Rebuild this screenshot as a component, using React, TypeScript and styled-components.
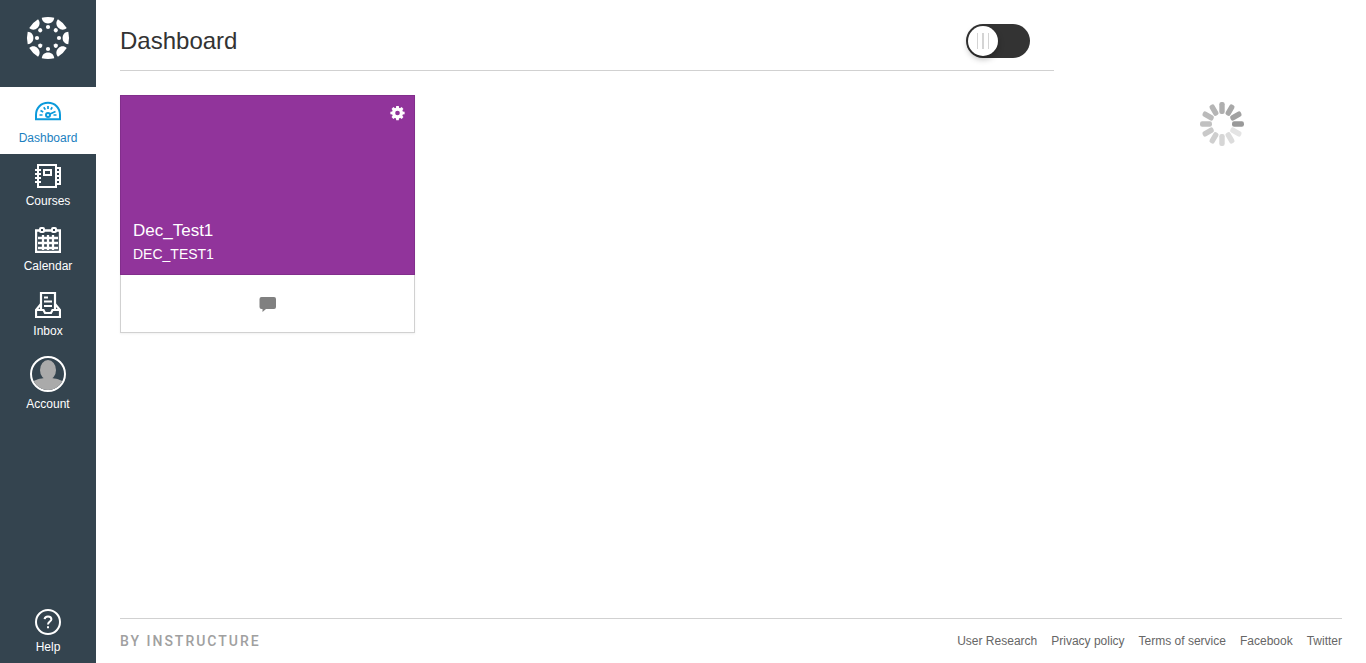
import React from 'react';
import styled, { createGlobalStyle, css } from 'styled-components';

const GlobalStyle = createGlobalStyle`
  *, *::before, *::after { box-sizing: border-box; }
  body {
    margin: 0;
    background: #fff;
    color: #333;
    font-family: "Liberation Sans", Arial, sans-serif;
    font-size: 12px;
    line-height: 16px;
  }
  a { color: inherit; text-decoration: none; }
  svg { display: block; }
`;

const Page = styled.div`
  display: flex;
  min-height: 100vh;
`;

const SideNav = styled.nav`
  flex: none;
  display: flex;
  flex-direction: column;
  width: 96px;
  background: #34444f;
`;

const LogoLink = styled.a`
  display: flex;
  justify-content: center;
  height: 87px;
  padding-top: 16px;
`;

const NavList = styled.ul`
  list-style: none;
  margin: 0;
  padding: 0;
  flex: 1;
  display: flex;
  flex-direction: column;
`;

const NavItem = styled.li<{ $last?: boolean }>`
  ${({ $last }) => $last && css`margin-top: auto;`}
`;

const NavLink = styled.a<{ $active?: boolean }>`
  display: flex;
  flex-direction: column;
  align-items: center;
  gap: 5px;
  padding: ${({ $active }) => ($active ? '9px 0 8px' : '9px 0')};
  color: ${({ $active }) => ($active ? '#1c7fc0' : '#fff')};
  background: ${({ $active }) => ($active ? '#fff' : 'transparent')};
`;

const HelpLink = styled(NavLink)`
  gap: 4px;
  padding-bottom: 8px;
`;

const Avatar = styled.span`
  width: 36px;
  height: 36px;
  margin: -1px 0;
  border: 2px solid #fff;
  border-radius: 50%;
  overflow: hidden;
`;

const Content = styled.div`
  flex: 1;
  min-width: 0;
  display: flex;
  flex-direction: column;
  padding: 0 24px;
`;

const Columns = styled.div`
  flex: 1;
  display: flex;
  gap: 24px;
`;

const Main = styled.main`
  flex: 1;
  min-width: 0;
`;

const Header = styled.header`
  display: flex;
  align-items: center;
  justify-content: space-between;
  padding: 24px 24px 12px 0;
  border-bottom: 1px solid #d1d1d1;
`;

const Title = styled.h1`
  margin: 0;
  font-size: 24px;
  line-height: 34px;
  font-weight: 400;
`;

const Switch = styled.input`
  appearance: none;
  margin: 0;
  width: 64px;
  height: 34px;
  padding: 2px;
  border-radius: 17px;
  background: #333;
  cursor: pointer;

  &::before {
    content: "";
    display: block;
    width: 30px;
    height: 30px;
    border-radius: 50%;
    background:
      linear-gradient(#d4d4d4, #d4d4d4) 9px 7px / 1px 16px no-repeat,
      linear-gradient(#d4d4d4, #d4d4d4) 14px 7px / 2px 16px no-repeat,
      linear-gradient(#d4d4d4, #d4d4d4) 20px 7px / 1px 16px no-repeat,
      #fff;
    box-shadow: 0 3px 6px rgba(0, 0, 0, 0.3);
  }
  &:checked::before { margin-left: 30px; }
`;

const Cards = styled.div`
  display: flex;
  flex-wrap: wrap;
  gap: 24px;
  padding: 24px 0;
`;

const Card = styled.article`
  width: 295px;
  box-shadow: 0 1px 2px rgba(0, 0, 0, 0.06);
`;

const CardHero = styled.div`
  display: flex;
  flex-direction: column;
  justify-content: space-between;
  height: 180px;
  padding: 9px 9px 8px 12px;
  border: 1px solid #822e8c;
  background: #91349b;
  color: #fff;
`;

const IconButton = styled.button`
  align-self: flex-end;
  padding: 0;
  border: 0;
  background: none;
  color: inherit;
  cursor: pointer;
`;

const CardName = styled.h2`
  margin: 0;
  font-size: 17px;
  line-height: 22px;
  font-weight: 400;
`;

const CardCode = styled.p`
  margin: 0;
  font-size: 14px;
  line-height: 24px;
`;

const CardActions = styled.div`
  display: flex;
  align-items: center;
  justify-content: center;
  height: 58px;
  border: 1px solid #d1d1d1;
  border-top: 0;
`;

const Aside = styled.aside`
  flex: none;
  display: flex;
  justify-content: center;
  width: 288px;
  margin-right: -24px;
  padding-top: 102px;
`;

const Footer = styled.footer`
  display: flex;
  align-items: center;
  justify-content: space-between;
  padding: 14px 0;
  border-top: 1px solid #d1d1d1;
  color: #666;
`;

const Brand = styled.a`
  font-family: Roboto, sans-serif;
  font-size: 14px;
  font-weight: 500;
  letter-spacing: 2px;
  color: #a0a0a0;
`;

const FooterLinks = styled.div`
  display: flex;
  gap: 14px;
`;

const eight = [0, 45, 90, 135, 180, 225, 270, 315];

const Logo = () => (
  <svg width="44" height="44" viewBox="-22 -22 44 44" fill="#fff" aria-hidden="true">
    {eight.map((a) => (
      <g key={a} transform={`rotate(${a})`}>
        <path d="M-6.2 -20.3Q0 -21.8 6.2 -20.3C6 -17 3.6 -14.6 0 -14.6S-6 -17 -6.2 -20.3Z" />
        <circle cy="-11" r="2.1" />
      </g>
    ))}
  </svg>
);

const DashboardIcon = () => (
  <svg width="26" height="29" viewBox="0 0 26 29" fill="none" stroke="#0c9adb" strokeWidth="2" aria-hidden="true">
    <path d="M1 23.2V19C1 12 6 6.8 13 6.8S25 12 25 19V23.2Z" />
    <circle cx="13" cy="19" r="2" />
    <path d="M15 18L20.5 15.5M4.5 19H7.5M18.5 19H21.5M5.5 14.5L8.2 16M8.8 11.2L10.3 13.6M13 10V13M17.2 11.2L15.8 13.6" strokeWidth="1.7" />
  </svg>
);

const CoursesIcon = () => (
  <svg width="26" height="25" viewBox="0 0 26 25" fill="none" stroke="#fff" strokeWidth="2" aria-hidden="true">
    <path d="M3 2H21V24H3Z" />
    <rect x="9" y="7" width="7" height="5" />
    <path d="M0 7H6M0 11H6M0 15H6M0 19H6" />
    <path d="M21 5H25V21H21M21 9H25M21 13H25M21 17H25" />
  </svg>
);

const CalendarIcon = () => (
  <svg width="26" height="26" viewBox="0 0 26 26" fill="none" stroke="#fff" strokeWidth="2" aria-hidden="true">
    <path d="M5 3.5H1V25H25V3.5H21M9 3.5H17" strokeWidth="2.4" />
    <rect x="5" y="1" width="4" height="4" rx="1" />
    <rect x="17" y="1" width="4" height="4" rx="1" />
    <path d="M3 11H23M3 16H23M3 21H23M8 8V23M13 8V23M18 8V23" strokeWidth="2.3" />
  </svg>
);

const InboxIcon = () => (
  <svg width="26" height="26" viewBox="0 0 26 26" fill="none" stroke="#fff" strokeWidth="2.2" aria-hidden="true">
    <path d="M6 17V1H20V17" />
    <path d="M9 5.5H13M9 9.5H17M9 14H17" />
    <path d="M6 12L1 18V25H25V18L20 12" />
    <path d="M1 18H8.5L10 21H16L17.5 18H25" />
  </svg>
);

const HelpIcon = () => (
  <svg width="26" height="26" viewBox="0 0 26 26" fill="none" stroke="#fff" strokeWidth="2" aria-hidden="true">
    <circle cx="13" cy="13" r="12" />
    <path d="M9.6 10.2C9.8 8.3 11.1 7.4 13 7.4C15 7.4 16.4 8.5 16.4 10.2C16.4 12.6 13 12.6 13 15.6M13 17.2V19.2" />
  </svg>
);

const PersonIcon = () => (
  <svg width="32" height="32" viewBox="0 0 32 32" fill="#aaa" aria-hidden="true">
    <ellipse cx="16" cy="12" rx="8" ry="10" />
    <path d="M12 19H20V20C26 21 31 22 32 26V32H0V26C1 22 6 21 12 20Z" />
  </svg>
);

const GearIcon = () => (
  <svg width="15" height="16" viewBox="-8 -8 16 16" aria-hidden="true">
    <circle r="4.2" fill="none" stroke="currentColor" strokeWidth="3.4" />
    {eight.map((a) => (
      <path key={a} transform={`rotate(${a})`} d="M-1.7 -5L-1.4 -7.6H1.4L1.7 -5Z" fill="currentColor" />
    ))}
  </svg>
);

const CommentIcon = () => (
  <svg width="17" height="17" viewBox="0 0 17 17" fill="#808080" aria-hidden="true">
    <path d="M2.5 2H15Q17 2 17 4V12Q17 14 15 14H7L3.5 17V14H2.5Q.5 14 .5 12V4Q.5 2 2.5 2Z" />
  </svg>
);

const spokes = ['#999', '#e4e4e4', '#dcdcdc', '#d6d6d6', '#cfcfcf', '#c9c9c9', '#c1c1c1', '#bbb', '#b5b5b5', '#afafaf', '#a8a8a8', '#a1a1a1'];

const Spinner = () => (
  <svg width="44" height="44" viewBox="-22 -22 44 44" role="img" aria-label="Loading">
    {spokes.map((fill, i) => (
      <rect key={i} x="10" y="-2.7" width="12" height="5.4" rx="2.2" fill={fill} transform={`rotate(${i * 30})`} />
    ))}
  </svg>
);

const links = ['User Research', 'Privacy policy', 'Terms of service', 'Facebook', 'Twitter'];

export default function App() {
  return (
    <Page>
      <GlobalStyle />
      <SideNav aria-label="Global navigation">
        <LogoLink href="#" aria-label="Home"><Logo /></LogoLink>
        <NavList>
          <NavItem><NavLink href="#" $active aria-current="page"><DashboardIcon />Dashboard</NavLink></NavItem>
          <NavItem><NavLink href="#"><CoursesIcon />Courses</NavLink></NavItem>
          <NavItem><NavLink href="#"><CalendarIcon />Calendar</NavLink></NavItem>
          <NavItem><NavLink href="#"><InboxIcon />Inbox</NavLink></NavItem>
          <NavItem><NavLink href="#"><Avatar><PersonIcon /></Avatar>Account</NavLink></NavItem>
          <NavItem $last><HelpLink href="#"><HelpIcon />Help</HelpLink></NavItem>
        </NavList>
      </SideNav>
      <Content>
        <Columns>
          <Main>
            <Header>
              <Title>Dashboard</Title>
              <Switch type="checkbox" role="switch" aria-label="Toggle dashboard view" />
            </Header>
            <Cards>
              <Card>
                <CardHero>
                  <IconButton type="button" aria-label="Course settings"><GearIcon /></IconButton>
                  <div>
                    <CardName>Dec_Test1</CardName>
                    <CardCode>DEC_TEST1</CardCode>
                  </div>
                </CardHero>
                <CardActions>
                  <a href="#" aria-label="Discussions"><CommentIcon /></a>
                </CardActions>
              </Card>
            </Cards>
          </Main>
          <Aside><Spinner /></Aside>
        </Columns>
        <Footer>
          <Brand href="#">BY INSTRUCTURE</Brand>
          <FooterLinks>
            {links.map((l) => <a key={l} href="#">{l}</a>)}
          </FooterLinks>
        </Footer>
      </Content>
    </Page>
  );
}
